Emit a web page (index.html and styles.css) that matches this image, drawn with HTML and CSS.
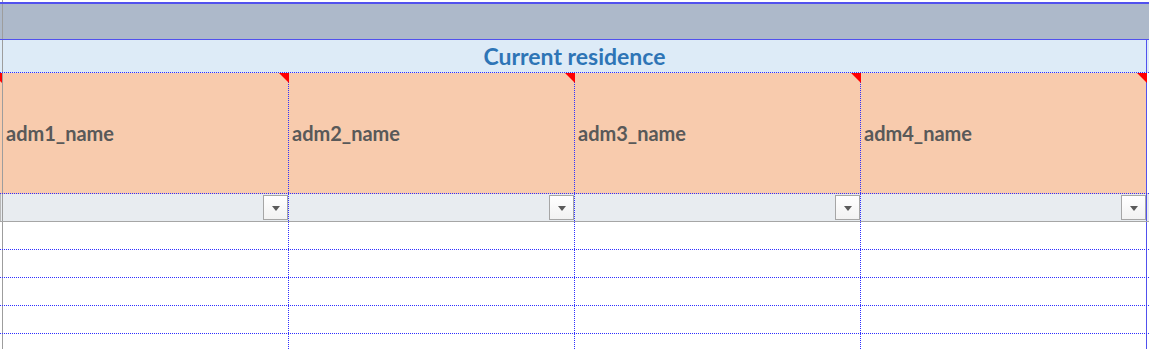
FILE: index.html
```html
<!DOCTYPE html>
<html>
<head>
<meta charset="utf-8">
<link rel="stylesheet" href="styles.css">
</head>
<body>
<div class="sheet">
  <div class="band top">
    <div class="gut"></div>
    <div class="main"></div>
  </div>
  <div class="blueline"></div>
  <div class="band grayband">
    <div class="gut"></div>
    <div class="main"></div>
  </div>
  <div class="band titleband">
    <div class="gut"></div>
    <div class="main">
      <div class="title">Current residence</div>
    </div>
    <div class="tail"></div>
  </div>
  <div class="band headband">
    <div class="gut"><span class="corner"></span></div>
    <div class="main cols">
      <div class="cell head"><span class="label">adm1_name</span><span class="corner"></span></div>
      <div class="cell head"><span class="label">adm2_name</span><span class="corner"></span></div>
      <div class="cell head"><span class="label">adm3_name</span><span class="corner"></span></div>
      <div class="cell head"><span class="label">adm4_name</span><span class="corner"></span></div>
    </div>
    <div class="tail"></div>
  </div>
  <div class="band filterband">
    <div class="gut"></div>
    <div class="main cols">
      <div class="cell filt"><span class="btn"><span class="tri"></span></span></div>
      <div class="cell filt"><span class="btn"><span class="tri"></span></span></div>
      <div class="cell filt"><span class="btn"><span class="tri"></span></span></div>
      <div class="cell filt"><span class="btn"><span class="tri"></span></span></div>
    </div>
    <div class="tail"></div>
  </div>
  <div class="band datarow">
    <div class="gut"></div>
    <div class="main cols"><div class="cell"></div><div class="cell"></div><div class="cell"></div><div class="cell"></div></div>
    <div class="tail"></div>
  </div>
  <div class="band datarow">
    <div class="gut"></div>
    <div class="main cols"><div class="cell"></div><div class="cell"></div><div class="cell"></div><div class="cell"></div></div>
    <div class="tail"></div>
  </div>
  <div class="band datarow">
    <div class="gut"></div>
    <div class="main cols"><div class="cell"></div><div class="cell"></div><div class="cell"></div><div class="cell"></div></div>
    <div class="tail"></div>
  </div>
  <div class="band datarow">
    <div class="gut"></div>
    <div class="main cols"><div class="cell"></div><div class="cell"></div><div class="cell"></div><div class="cell"></div></div>
    <div class="tail"></div>
  </div>
  <div class="band datarow last">
    <div class="gut"></div>
    <div class="main cols"><div class="cell"></div><div class="cell"></div><div class="cell"></div><div class="cell"></div></div>
    <div class="tail"></div>
  </div>
</div>
</body>
</html>
```

FILE: styles.css
```css
* { box-sizing: border-box; }
html, body { margin: 0; padding: 0; background: #ffffff; }
body { width: 1149px; height: 349px; overflow: hidden; font-family: Lato, "Open Sans", sans-serif; }

.sheet { width: 1149px; display: flex; flex-direction: column; }

.band { display: flex; width: 1149px; }
.gut { width: 2px; flex: none; position: relative; }
.main { border-left: 1px solid #9d9d9d; flex: none; width: 1145px; }
.tail { width: 2px; flex: none; }

.top { height: 2px; }

.blueline { height: 2px; background: #5151ee; }

.grayband { height: 35px; background: #adb9ca; }

.titleband {
  background: #ddebf7;
  border-top: 1px solid #5151ee;
  border-bottom: 1px dotted #2f2fff;
  height: 34px;
}
.title {
  width: 1144px;
  height: 32px;
  border-right: 1px solid #5151ee;
  display: flex;
  align-items: center;
  justify-content: center;
  color: #2e75b6;
  font-weight: 700;
  font-size: 23px;
  padding-bottom: 1px;
}

.cols { display: flex; }
.cell {
  width: 286px;
  flex: none;
  border-right: 1px dotted #2f2fff;
  position: relative;
}
.cell:last-child { border-right: 1px solid #5151ee; }

.headband {
  height: 121px;
  background: #f8cbad;
  border-bottom: 1px dotted #2f2fff;
}
.headband .tail { background: #ffffff; }
.head {
  height: 120px;
  display: flex;
  align-items: center;
  padding-left: 3px;
}
.label {
  color: #595959;
  font-weight: 700;
  font-size: 20px;
}
.corner {
  position: absolute;
  top: 0;
  right: 0;
  width: 0;
  height: 0;
  border-top: 10px solid #ff0000;
  border-left: 10px solid transparent;
}
.head .corner { right: -1px; }

.filterband {
  height: 28px;
  background: #e8ecf0;
  border-bottom: 1px solid #a6a6a6;
}
.filterband .gut { border-left: 1px solid #b8b8b8; }
.filt {
  height: 27px;
  display: flex;
  justify-content: flex-end;
  align-items: center;
}
.btn {
  width: 25px;
  height: 25px;
  border: 1px solid #a6a6a6;
  background: linear-gradient(#ffffff, #f2f2f2);
  display: flex;
  align-items: center;
  justify-content: center;
}
.tri {
  width: 0;
  height: 0;
  border-top: 5px solid #5a5a5a;
  border-left: 4.5px solid transparent;
  border-right: 4.5px solid transparent;
  margin-top: 1px;
}

.datarow {
  height: 28px;
  background: #ffffff;
  border-bottom: 1px dotted #2f2fff;
}
.datarow .cell { height: 27px; }
.datarow.last { border-bottom: none; }
```
